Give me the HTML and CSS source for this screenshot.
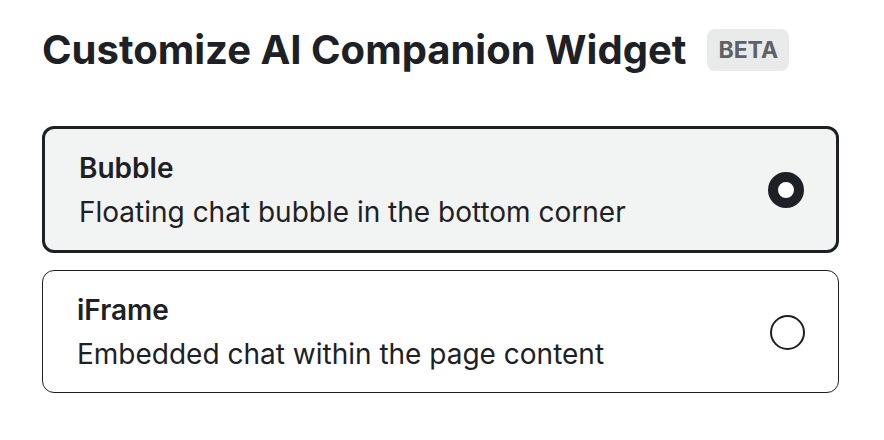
FILE: index.html
```html
<!DOCTYPE html>
<html lang="en">
<head>
<meta charset="utf-8">
<title>Customize AI Companion Widget</title>
<link rel="stylesheet" href="styles.css">
</head>
<body>
  <div class="page">
    <div class="header">
      <h1 class="title">Customize AI Companion Widget</h1>
      <span class="badge">BETA</span>
    </div>
    <div class="options">
      <label class="option option--selected">
        <div class="option__text">
          <div class="option__name">Bubble</div>
          <div class="option__desc">Floating chat bubble in the bottom corner</div>
        </div>
        <span class="radio radio--checked"></span>
      </label>
      <label class="option">
        <div class="option__text">
          <div class="option__name">iFrame</div>
          <div class="option__desc">Embedded chat within the page content</div>
        </div>
        <span class="radio"></span>
      </label>
    </div>
  </div>
</body>
</html>
```
FILE: styles.css
```css
* { box-sizing: border-box; }
html, body { margin: 0; padding: 0; background: #ffffff; }
body {
  font-family: Inter, "Noto Sans", sans-serif;
  color: #1d2125;
}
.page {
  width: 797px;
  margin-left: 42px;
  padding-top: 29px;
}
.header {
  display: flex;
  align-items: center;
  gap: 21px;
  height: 42px;
}
.title {
  margin: 0;
  font-size: 40px;
  font-weight: 700;
  line-height: 42px;
  color: #1d2125;
}
.badge {
  display: inline-flex;
  align-items: center;
  justify-content: center;
  height: 42px;
  padding: 0 11px;
  border-radius: 8px;
  background: #e9eaea;
  color: #5e6166;
  font-size: 23px;
  font-weight: 700;
}
.options {
  display: flex;
  flex-direction: column;
  gap: 17px;
  margin-top: 55px;
}
.option {
  display: flex;
  align-items: center;
  justify-content: space-between;
  padding: 19px 32px 18px 34px;
  border: 1.5px solid #1d2125;
  border-radius: 12px;
  background: #ffffff;
}
.option--selected {
  border-width: 3px;
  background: #f2f3f3;
}
.option__text {
  display: flex;
  flex-direction: column;
  gap: 4px;
}
.option__name {
  font-size: 28px;
  font-weight: 600;
  line-height: 40px;
}
.option__desc {
  font-size: 28px;
  font-weight: 400;
  line-height: 40px;
}
.radio {
  width: 35px;
  height: 35px;
  border-radius: 50%;
  border: 2px solid #1d2125;
  background: #ffffff;
  margin-right: 1px;
}
.radio--checked {
  width: 36px;
  height: 36px;
  border: 10px solid #1d2125;
  margin-right: 0;
}
```
